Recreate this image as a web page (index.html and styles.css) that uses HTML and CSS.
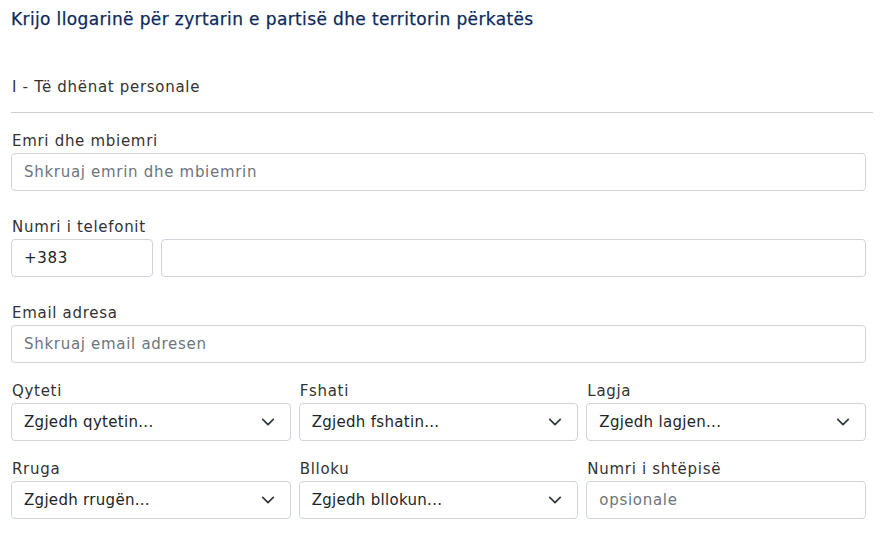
FILE: index.html
```html
<!DOCTYPE html>
<html lang="sq">
<head>
<meta charset="utf-8">
<link rel="stylesheet" href="styles.css">
</head>
<body>
<div class="page">
  <h1 class="title">Krijo llogarinë për zyrtarin e partisë dhe territorin përkatës</h1>
  <h2 class="section">I - Të dhënat personale</h2>
  <hr class="rule">
  <form class="form">
    <div class="group">
      <label class="label">Emri dhe mbiemri</label>
      <div class="input placeholder">Shkruaj emrin dhe mbiemrin</div>
    </div>
    <div class="group">
      <label class="label">Numri i telefonit</label>
      <div class="phone">
        <div class="input prefix">+383</div>
        <div class="input grow"></div>
      </div>
    </div>
    <div class="group last">
      <label class="label">Email adresa</label>
      <div class="input placeholder">Shkruaj email adresen</div>
    </div>
    <div class="grid">
      <div class="cell">
        <label class="label">Qyteti</label>
        <div class="input select">Zgjedh qytetin...<svg class="chev" viewBox="0 0 16 16"><path d="M2 5l6 6 6-6" fill="none" stroke="#343a40" stroke-width="2" stroke-linecap="round" stroke-linejoin="round"/></svg></div>
      </div>
      <div class="cell">
        <label class="label">Fshati</label>
        <div class="input select">Zgjedh fshatin...<svg class="chev" viewBox="0 0 16 16"><path d="M2 5l6 6 6-6" fill="none" stroke="#343a40" stroke-width="2" stroke-linecap="round" stroke-linejoin="round"/></svg></div>
      </div>
      <div class="cell">
        <label class="label">Lagja</label>
        <div class="input select">Zgjedh lagjen...<svg class="chev" viewBox="0 0 16 16"><path d="M2 5l6 6 6-6" fill="none" stroke="#343a40" stroke-width="2" stroke-linecap="round" stroke-linejoin="round"/></svg></div>
      </div>
      <div class="cell">
        <label class="label">Rruga</label>
        <div class="input select">Zgjedh rrugën...<svg class="chev" viewBox="0 0 16 16"><path d="M2 5l6 6 6-6" fill="none" stroke="#343a40" stroke-width="2" stroke-linecap="round" stroke-linejoin="round"/></svg></div>
      </div>
      <div class="cell">
        <label class="label">Blloku</label>
        <div class="input select">Zgjedh bllokun...<svg class="chev" viewBox="0 0 16 16"><path d="M2 5l6 6 6-6" fill="none" stroke="#343a40" stroke-width="2" stroke-linecap="round" stroke-linejoin="round"/></svg></div>
      </div>
      <div class="cell">
        <label class="label">Numri i shtëpisë</label>
        <div class="input placeholder">opsionale</div>
      </div>
    </div>
  </form>
</div>
</body>
</html>
```

FILE: styles.css
```css
* { box-sizing: border-box; }
html, body { margin: 0; padding: 0; background: #fff; }
body {
  font-family: "DejaVu Sans", "Noto Sans", sans-serif;
  color: #212529;
  letter-spacing: 0.7px;
}
.page {
  padding: 8px 9px 0 11px;
}
.title {
  margin: 0;
  font-size: 17px;
  line-height: 22px;
  font-weight: 400;
  color: #0d2a5c;
  letter-spacing: 0.37px;
  -webkit-text-stroke: 0.25px #0d2a5c;
}
.section {
  margin: 46px 0 0 1px;
  font-size: 15px;
  line-height: 22px;
  font-weight: 400;
  color: #333;
}
.rule {
  margin: 14px 0 0 0;
  border: 0;
  border-top: 1px solid #cfcfcf;
  height: 0;
}
.form {
  margin-right: 7px;
  padding-top: 17px;
}
.group { margin-bottom: 25px; }
.group.last { margin-bottom: 17px; }
.label {
  display: block;
  font-size: 15px;
  line-height: 22px;
  margin: 0 0 1px 1px;
  color: #333;
}
.input {
  height: 38px;
  border: 1px solid #ced4da;
  border-radius: 4px;
  padding: 0 12px;
  display: flex;
  align-items: center;
  font-size: 15px;
  color: #212529;
  background: #fff;
}
.placeholder { color: #6c757d; }
.phone {
  display: flex;
  gap: 8px;
}
.prefix { width: 142px; flex: none; }
.grow { flex: 1; }
.grid {
  display: grid;
  grid-template-columns: 1fr 1fr 1fr;
  column-gap: 8px;
  row-gap: 17px;
}
.select {
  justify-content: space-between;
  padding-right: 15px;
  letter-spacing: 0.3px;
}
.chev { width: 14px; height: 14px; flex: none; }
```
